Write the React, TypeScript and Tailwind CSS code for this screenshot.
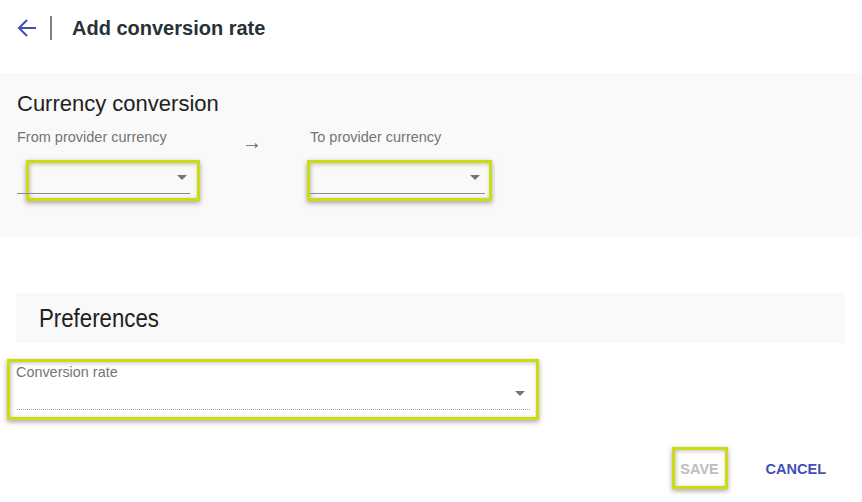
// Lime focus ring used by the highlighted controls
const ring =
  "border-[3px] border-[#cddc12] shadow-[0_2px_5px_rgba(0,0,0,0.35),inset_1px_1px_4px_rgba(0,0,0,0.25)]"

function Caret() {
  return (
    <span className="block w-0 h-0 border-l-[5px] border-r-[5px] border-t-[5px] border-l-transparent border-r-transparent border-t-[#757575]" />
  )
}

function BackArrow() {
  return (
    <svg width="20" height="18" viewBox="0 0 20 18" fill="none" className="text-[#3f51b5]">
      <path d="M19 9H2M10 1L2 9l8 8" stroke="currentColor" strokeWidth="2" />
    </svg>
  )
}

function CurrencySelect({
  label,
  box,
  line,
}: {
  label: string
  box: string
  line: string
}) {
  return (
    <div className="flex flex-col">
      <div className="text-[14.5px] text-[#757575] leading-4 h-4">{label}</div>
      <div className="relative mt-[15px] h-[40px] w-[174px]">
        <div className={`absolute top-0 h-[41px] ${box} ${ring}`} />
        <div className={`absolute left-0 top-[33px] border-b border-[#8a8a8a] ${line}`} />
        <div className="absolute right-[4px] top-[15px]">
          <Caret />
        </div>
      </div>
    </div>
  )
}

export default function App() {
  return (
    <div className="w-[862px] h-[502px] bg-white font-['Liberation_Sans',Arial,sans-serif] text-[#212121]">
      {/* Header */}
      <div className="flex items-center h-[73px] pl-[17px] pb-[17px]">
        <BackArrow />
        <div className="ml-[13px] w-[2px] h-[24px] bg-[#78808a]" />
        <div className="ml-[20px] text-[20px] font-bold text-[#263238] leading-6">
          Add conversion rate
        </div>
      </div>

      {/* Currency conversion */}
      <div className="bg-[#f9f9f9] h-[164px] pl-[17px] pt-[18px]">
        <div className="text-[22px] leading-[26px] text-[#212121]">Currency conversion</div>
        <div className="flex mt-[12px]">
          <CurrencySelect label="From provider currency" box="left-[9px] w-[174px]" line="w-[173px]" />
          <div className="ml-[51px] mt-[5px] text-[20px] text-[#616161] leading-4">→</div>
          <div className="ml-[48px]">
            <CurrencySelect label="To provider currency" box="left-[-3px] w-[185px]" line="w-[175px]" />
          </div>
        </div>
      </div>

      {/* Preferences */}
      <div className="mt-[56px] ml-[16px] mr-[17px] h-[50px] bg-[#f9f9f9] flex items-center pl-[23px]">
        <div className="text-[25px] leading-[28px] text-[#212121] scale-x-[0.89] origin-left whitespace-nowrap">
          Preferences
        </div>
      </div>

      <div className="mt-[16px] ml-[7px] relative w-[532px] h-[61px]">
        <div className={`absolute inset-0 ${ring}`} />
        <div className="absolute left-[9px] top-[4px] text-[15px] leading-[18px] text-[#757575] scale-x-[0.96] origin-left whitespace-nowrap">
          Conversion rate
        </div>
        <div className="absolute right-[14px] top-[32px]">
          <Caret />
        </div>
        <div className="absolute left-[10px] right-[9px] top-[50px] border-b border-dotted border-[#9e9e9e]" />
      </div>

      {/* Actions */}
      <div className="flex justify-end items-center mt-[27px] pr-[36px]">
        <div className={`w-[56px] h-[42px] flex items-center justify-center ${ring}`}>
          <span className="text-[14.5px] font-bold text-[#bdbdbd] mt-[4px]">SAVE</span>
        </div>
        <div className="ml-[38px] text-[14.5px] font-bold text-[#3f51b5] mt-[4px]">CANCEL</div>
      </div>
    </div>
  )
}
